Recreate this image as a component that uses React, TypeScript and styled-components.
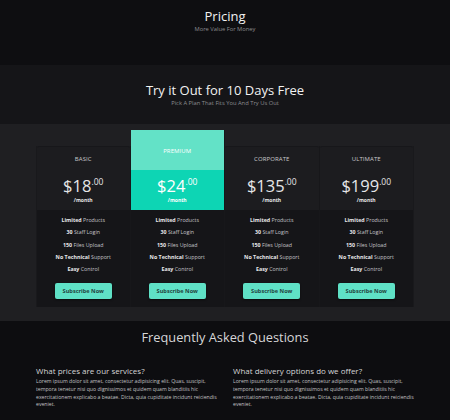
import React from "react";
import styled, { createGlobalStyle } from "styled-components";

const Global = createGlobalStyle`
  html, body { margin: 0; padding: 0; background: #0e0e11; }
  body { font-family: "Open Sans", "Noto Sans", sans-serif; }
  * { box-sizing: border-box; }
`;

const Page = styled.div`
  width: 450px;
  display: flex;
  flex-direction: column;
`;

const Hero = styled.header`
  height: 65px;
  background: #0e0e11;
  display: flex;
  flex-direction: column;
  align-items: center;
  padding-top: 7px;
`;

const Band = styled.section`
  height: 59px;
  background: #151518;
  display: flex;
  flex-direction: column;
  align-items: center;
  padding-top: 16px;
`;

const Title = styled.h1`
  margin: 0;
  font-size: 13px;
  line-height: 18px;
  font-weight: 400;
  color: #f2f2f2;
`;

const Sub = styled.p`
  margin: 0;
  font-size: 5.8px;
  line-height: 8px;
  color: #8c8c90;
`;

const PlansSection = styled.section`
  background: #1f1f22;
  padding: 6px 36px 14px;
`;

const Table = styled.div`
  display: grid;
  grid-template-columns: repeat(4, 1fr);
  align-items: end;
`;

const Card = styled.div<{ $first?: boolean; $last?: boolean }>`
  display: flex;
  flex-direction: column;
  border-left: ${(p) => (p.$first ? "1px solid #19191c" : "none")};
  border-right: 1px solid ${(p) => (p.$last ? "#19191c" : "#17171a")};
`;

const NameBlock = styled.div<{ $featured?: boolean }>`
  height: ${(p) => (p.$featured ? "40px" : "24px")};
  background: ${(p) => (p.$featured ? "#63e2c7" : "#1c1c1f")};
  border-top: ${(p) => (p.$featured ? "none" : "1px solid #17171a")};
  border-radius: ${(p) => (p.$featured ? "0" : "2px 2px 0 0")};
  display: flex;
  align-items: center;
  justify-content: center;
  padding-top: 1px;
  font-size: 6px;
  letter-spacing: 0.1px;
  color: ${(p) => (p.$featured ? "#ffffff" : "#c9c9cc")};
  text-transform: uppercase;
`;

const PriceBlock = styled.div<{ $featured?: boolean }>`
  height: 40px;
  background: ${(p) => (p.$featured ? "#0dd5b4" : "#1c1c1f")};
  display: flex;
  flex-direction: column;
  align-items: center;
  padding-top: 6px;
  color: ${(p) => (p.$featured ? "#ffffff" : "#e6e6e8")};
`;

const Price = styled.div`
  font-size: 16.5px;
  line-height: 20px;
  display: flex;
  align-items: flex-start;
`;

const Cents = styled.span`
  font-size: 8.5px;
  line-height: 11px;
`;

const Per = styled.div`
  font-size: 5px;
  font-weight: 700;
  line-height: 7px;
  margin-top: 1px;
`;

const Body = styled.div`
  background: #151518;
  height: 97px;
  padding-top: 4px;
  display: flex;
  flex-direction: column;
  align-items: center;
`;

const Feature = styled.div`
  font-size: 5.3px;
  line-height: 12.3px;
  color: #c4c4c8;
  b { color: #e8e8ea; font-weight: 700; }
`;

const Subscribe = styled.button`
  margin-top: 8px;
  height: 16px;
  width: 57px;
  border: none;
  border-radius: 2px;
  background: #5fe1c6;
  color: #23453f;
  font-family: inherit;
  font-size: 5.6px;
  font-weight: 700;
  padding: 0;
  box-shadow: 0 1px 2px rgba(0,0,0,0.5);
`;

const Faq = styled.section`
  background: #0d0d10;
  padding: 7px 36px 20px;
  display: flex;
  flex-direction: column;
  align-items: center;
`;

const FaqTitle = styled.h2`
  margin: 0;
  font-size: 12.8px;
  line-height: 18px;
  font-weight: 400;
  color: #d6d6d8;
`;

const FaqGrid = styled.div`
  margin-top: 19px;
  width: 100%;
  display: grid;
  grid-template-columns: 181px 181px;
  column-gap: 16px;
`;

const Question = styled.h3`
  margin: 0;
  font-size: 8px;
  line-height: 11px;
  font-weight: 400;
  color: #d4d4d6;
`;

const Answer = styled.p`
  margin: 2px 0 0;
  font-size: 5.15px;
  line-height: 7.8px;
  color: #c2c2c4;
`;

type Plan = { name: string; price: string; featured?: boolean };

const plans: Plan[] = [
  { name: "Basic", price: "18" },
  { name: "Premium", price: "24", featured: true },
  { name: "Corporate", price: "135" },
  { name: "Ultimate", price: "199" },
];

const lorem =
  "Lorem ipsum dolor sit amet, consectetur adipisicing elit. Quas, suscipit, tempora tenetur nisi quo dignissimos et quidem quam blanditiis hic exercitationem explicabo a beatae. Dicta, quia cupiditate incidunt reiciendis eveniet.";

export default function App() {
  return (
    <Page>
      <Global />
      <Hero>
        <Title>Pricing</Title>
        <Sub>More Value For Money</Sub>
      </Hero>
      <Band>
        <Title>Try it Out for 10 Days Free</Title>
        <Sub>Pick A Plan That Fits You And Try Us Out</Sub>
      </Band>
      <PlansSection>
        <Table>
          {plans.map((p, i) => (
            <Card key={p.name} $first={i === 0} $last={i === plans.length - 1}>
              <NameBlock $featured={p.featured}>{p.name}</NameBlock>
              <PriceBlock $featured={p.featured}>
                <Price>
                  ${p.price}
                  <Cents>.00</Cents>
                </Price>
                <Per>/month</Per>
              </PriceBlock>
              <Body>
                <Feature><b>Limited</b> Products</Feature>
                <Feature><b>30</b> Staff Login</Feature>
                <Feature><b>150</b> Files Upload</Feature>
                <Feature><b>No Technical</b> Support</Feature>
                <Feature><b>Easy</b> Control</Feature>
                <Subscribe>Subscribe Now</Subscribe>
              </Body>
            </Card>
          ))}
        </Table>
      </PlansSection>
      <Faq>
        <FaqTitle>Frequently Asked Questions</FaqTitle>
        <FaqGrid>
          <div>
            <Question>What prices are our services?</Question>
            <Answer>{lorem}</Answer>
          </div>
          <div>
            <Question>What delivery options do we offer?</Question>
            <Answer>{lorem}</Answer>
          </div>
        </FaqGrid>
      </Faq>
    </Page>
  );
}
